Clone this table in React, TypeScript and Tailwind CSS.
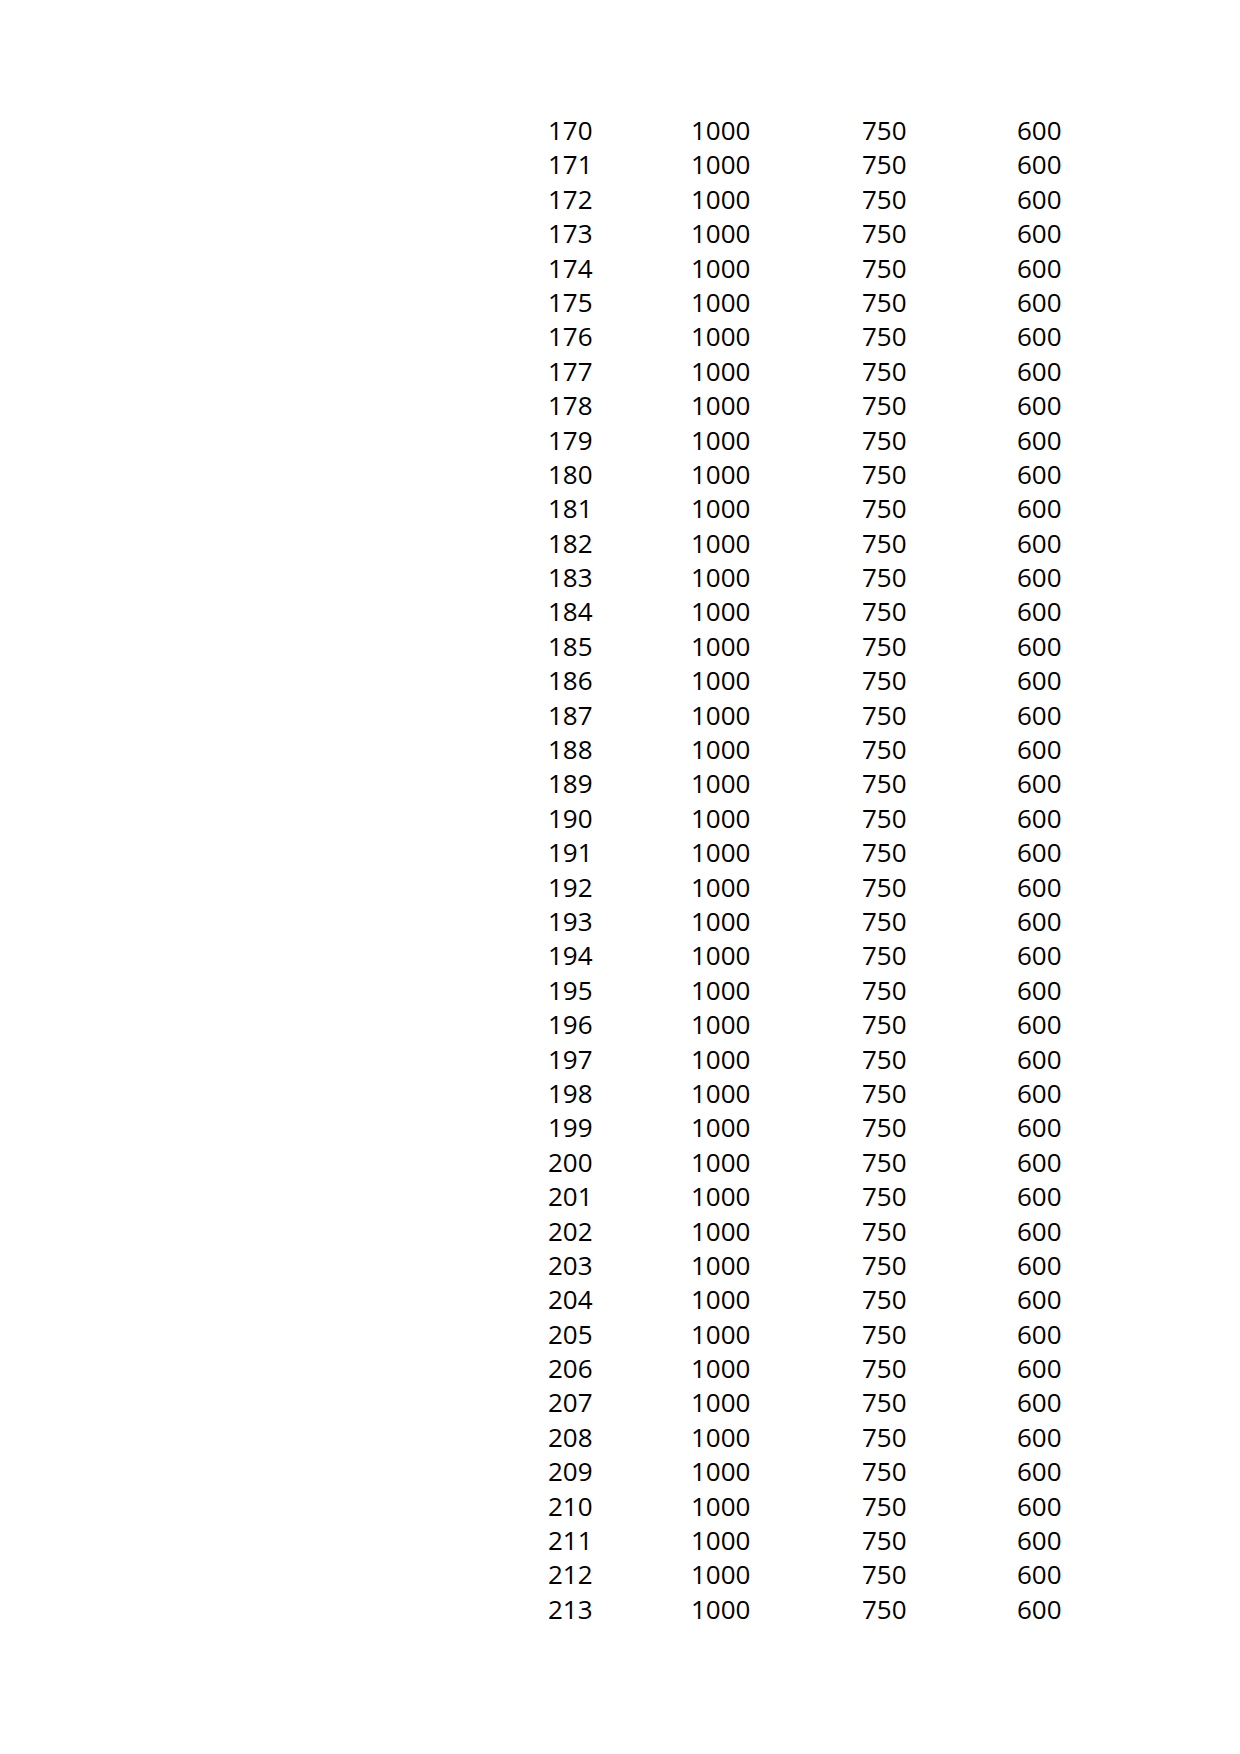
import React from "react";

export default function App() {
  const rows = Array.from({ length: 44 }, (_, i) => 170 + i);
  return (
    <div className="w-[1240px] h-[1754px] bg-white text-black" style={{ fontFamily: '"Open Sans", "Noto Sans", sans-serif' }}>
      <div className="pt-[113px] pl-[548px]">
        {rows.map((r) => (
          <div key={r} className="grid grid-cols-[143px_171px_155px_80px] h-[34.4px] leading-[34.4px] text-[26px]">
            <span>{r}</span>
            <span>1000</span>
            <span>750</span>
            <span>600</span>
          </div>
        ))}
      </div>
    </div>
  );
}
